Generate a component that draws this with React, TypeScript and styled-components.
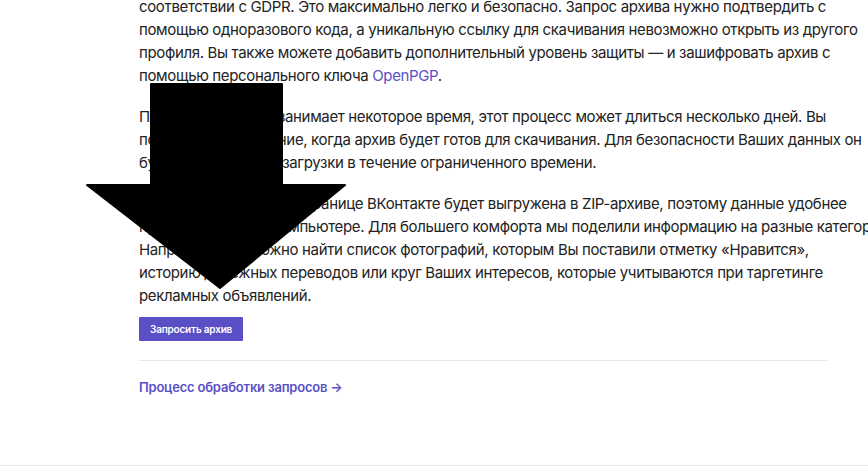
import styled, { createGlobalStyle } from "styled-components";

const GlobalStyle = createGlobalStyle`
  body {
    margin: 0;
    background: #ffffff;
    font-family: Inter, "Liberation Sans", sans-serif;
    color: #222222;
    overflow: hidden;
  }
`;

const StyledPage = styled.div`
  position: relative;
  height: 471px;
  border-bottom: 1px solid #ebebeb;
  box-sizing: border-box;
`;

const StyledContent = styled.div`
  width: 688px;
  margin: -5px 0 0 139px;
`;

const StyledParagraph = styled.p`
  margin: 0 0 18px 0;
  font-size: 15px;
  line-height: 23px;
  letter-spacing: -0.35px;
  white-space: nowrap;
`;

const StyledLink = styled.a`
  color: #5a50c6;
  text-decoration: none;
`;

const StyledButton = styled.button`
  display: block;
  margin-top: -8px;
  height: 24px;
  padding: 0 11px;
  border: none;
  border-radius: 1px;
  background: #5a4fc4;
  color: #ffffff;
  font-family: Inter, "Liberation Sans", sans-serif;
  font-size: 10px;
  font-weight: 600;
  letter-spacing: -0.2px;
`;

const StyledDivider = styled.div`
  border-bottom: 1px solid #e6e6e6;
  margin: 19px 0 20px 0;
`;

const StyledProcessLink = styled.a`
  display: block;
  margin-top: -2px;
  color: #5a50c6;
  font-size: 13px;
  font-weight: 600;
  letter-spacing: -0.2px;
  text-decoration: none;
`;

const StyledArrow = styled.svg`
  position: absolute;
  left: 0;
  top: 0;
`;

const App = () => {
  return (
    <StyledPage>
      <GlobalStyle />
      <StyledContent>
        <StyledParagraph>
          соответствии с GDPR. Это максимально легко и безопасно. Запрос архива нужно подтвердить с
          <br />
          помощью одноразового кода, а уникальную ссылку для скачивания невозможно открыть из другого
          <br />
          профиля. Вы также можете добавить дополнительный уровень защиты — и зашифровать архив с
          <br />
          помощью персонального ключа <StyledLink>OpenPGP</StyledLink>.
        </StyledParagraph>
        <StyledParagraph>
          Подготовка архива занимает некоторое время, этот процесс может длиться несколько дней. Вы
          <br />
          получите уведомление, когда архив будет готов для скачивания. Для безопасности Ваших данных он
          <br />
          будет доступен для загрузки в течение ограниченного времени.
        </StyledParagraph>
        <StyledParagraph>
          Информация о Вашей странице ВКонтакте будет выгружена в ZIP-архиве, поэтому данные удобнее
          <br />
          просматривать на компьютере. Для большего комфорта мы поделили информацию на разные категории.
          <br />
          Например, там можно найти список фотографий, которым Вы поставили отметку «Нравится»,
          <br />
          историю денежных переводов или круг Ваших интересов, которые учитываются при таргетинге
          <br />
          рекламных объявлений.
        </StyledParagraph>
        <StyledButton>Запросить архив</StyledButton>
        <StyledDivider />
        <StyledProcessLink>Процесс обработки запросов →</StyledProcessLink>
      </StyledContent>
      <StyledArrow width="868" height="471" viewBox="0 0 868 471">
        <path
          d="M151 89 H282 V190 H345 L220 293 L87 190 H151 Z"
          fill="#000000"
          stroke="#000000"
          strokeWidth="2"
          strokeLinejoin="round"
        />
      </StyledArrow>
    </StyledPage>
  );
};

export default App;
